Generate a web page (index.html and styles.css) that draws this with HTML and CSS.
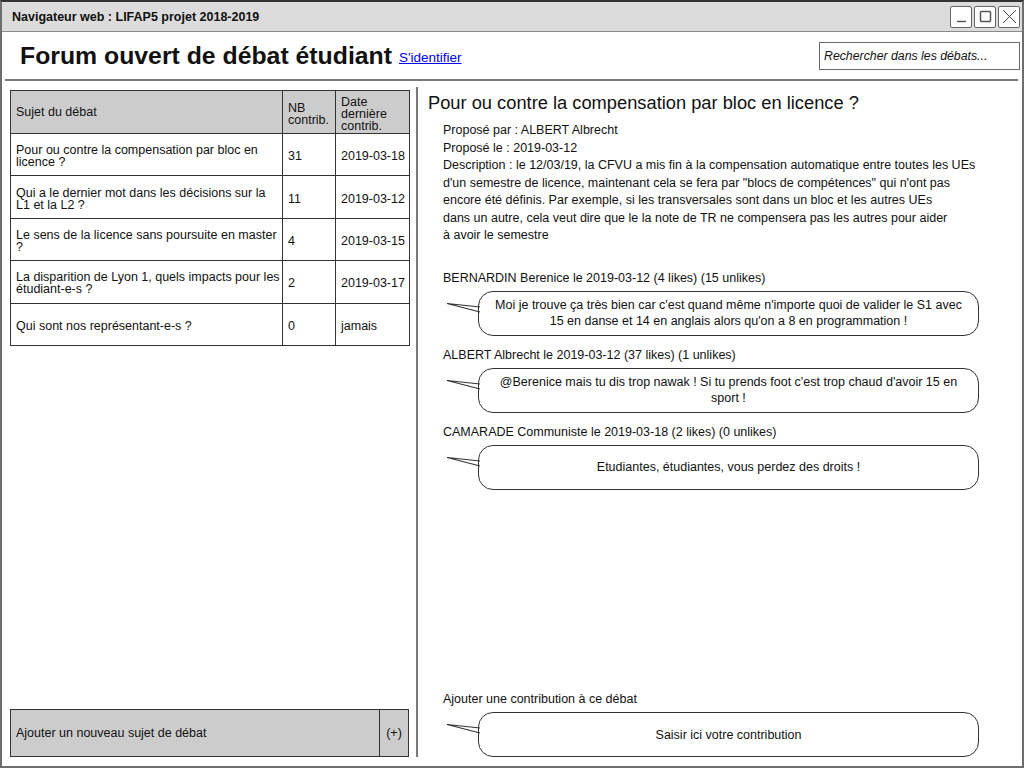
FILE: index.html
```html
<!DOCTYPE html>
<html lang="fr">
<head>
<meta charset="utf-8">
<title>Forum ouvert de débat étudiant</title>
<link rel="stylesheet" href="styles.css">
</head>
<body>
<div class="window">
  <div class="titlebar">
    <span class="titlebar-text">Navigateur web : LIFAP5 projet 2018-2019</span>
    <div class="controls">
      <span class="ctrl"><svg width="17" height="17" viewBox="0 0 17 17"><path d="M4 13.5 H13" stroke="#555" stroke-width="1.5"/></svg></span>
      <span class="ctrl"><svg width="17" height="17" viewBox="0 0 17 17"><rect x="3.5" y="3.5" width="10" height="10" fill="none" stroke="#555" stroke-width="1.5" rx="1"/></svg></span>
      <span class="ctrl"><svg width="17" height="17" viewBox="0 0 17 17"><path d="M2 2 L15 15 M15 2 L2 15" stroke="#444" stroke-width="1"/></svg></span>
    </div>
  </div>
  <div class="header">
    <h1 class="site-title">Forum ouvert de débat étudiant</h1>
    <a class="login" href="#">S'identifier</a>
    <div class="search">Rechercher dans les débats...</div>
  </div>
  <div class="rule"></div>
  <div class="main">
    <div class="left">
      <table class="topics">
        <thead>
          <tr>
            <th class="c-subject">Sujet du débat</th>
            <th class="c-nb">NB<br>contrib.</th>
            <th class="c-date">Date<br>dernière<br>contrib.</th>
          </tr>
        </thead>
        <tbody>
          <tr><td class="c-subject">Pour ou contre la compensation par bloc en<br>licence ?</td><td class="c-nb">31</td><td class="c-date">2019-03-18</td></tr>
          <tr><td class="c-subject">Qui a le dernier mot dans les décisions sur la<br>L1 et la L2 ?</td><td class="c-nb">11</td><td class="c-date">2019-03-12</td></tr>
          <tr><td class="c-subject">Le sens de la licence sans poursuite en master<br>?</td><td class="c-nb">4</td><td class="c-date">2019-03-15</td></tr>
          <tr><td class="c-subject">La disparition de Lyon 1, quels impacts pour les<br>étudiant-e-s ?</td><td class="c-nb">2</td><td class="c-date">2019-03-17</td></tr>
          <tr><td class="c-subject">Qui sont nos représentant-e-s ?</td><td class="c-nb">0</td><td class="c-date">jamais</td></tr>
        </tbody>
      </table>
      <div class="add-topic">
        <span class="add-label">Ajouter un nouveau sujet de débat</span>
        <span class="add-plus">(+)</span>
      </div>
    </div>
    <div class="right">
      <h2 class="debate-title">Pour ou contre la compensation par bloc en licence ?</h2>
      <div class="meta">
        <div>Proposé par : ALBERT Albrecht</div>
        <div>Proposé le : 2019-03-12</div>
        <div>Description : le 12/03/19, la CFVU a mis fin à la compensation automatique entre toutes les UEs<br>d'un semestre de licence, maintenant cela se fera par "blocs de compétences" qui n'ont pas<br>encore été définis. Par exemple, si les transversales sont dans un bloc et les autres UEs<br>dans un autre, cela veut dire que le la note de TR ne compensera pas les autres pour aider<br>à avoir le semestre</div>
      </div>

      <div class="comments">
        <div class="comment">
          <div class="author">BERNARDIN Berenice le 2019-03-12 (4 likes) (15 unlikes)</div>
          <div class="bubble-wrap">
            <svg class="tail" width="34" height="12" viewBox="0 0 34 12"><path d="M0 1.5 L33 5 M0 1.5 L33 10" stroke="#333" stroke-width="1.2" fill="none"/></svg>
            <div class="bubble">Moi je trouve ça très bien car c'est quand même n'importe quoi de valider le S1 avec<br>15 en danse et 14 en anglais alors qu'on a 8 en programmation !</div>
          </div>
        </div>
        <div class="comment">
          <div class="author">ALBERT Albrecht le 2019-03-12 (37 likes) (1 unlikes)</div>
          <div class="bubble-wrap">
            <svg class="tail" width="34" height="12" viewBox="0 0 34 12"><path d="M0 1.5 L33 5 M0 1.5 L33 10" stroke="#333" stroke-width="1.2" fill="none"/></svg>
            <div class="bubble">@Berenice mais tu dis trop nawak ! Si tu prends foot c'est trop chaud d'avoir 15 en<br>sport !</div>
          </div>
        </div>
        <div class="comment">
          <div class="author">CAMARADE Communiste le 2019-03-18 (2 likes) (0 unlikes)</div>
          <div class="bubble-wrap">
            <svg class="tail" width="34" height="12" viewBox="0 0 34 12"><path d="M0 1.5 L33 5 M0 1.5 L33 10" stroke="#333" stroke-width="1.2" fill="none"/></svg>
            <div class="bubble">Etudiantes, étudiantes, vous perdez des droits !</div>
          </div>
        </div>
      </div>

      <div class="comment new-comment">
        <div class="author">Ajouter une contribution à ce débat</div>
        <div class="bubble-wrap">
          <svg class="tail" width="34" height="12" viewBox="0 0 34 12"><path d="M0 1.5 L33 5 M0 1.5 L33 10" stroke="#333" stroke-width="1.2" fill="none"/></svg>
          <div class="bubble">Saisir ici votre contribution</div>
        </div>
      </div>
    </div>
  </div>
</div>
</body>
</html>
```

FILE: styles.css
```css
* { box-sizing: border-box; }

html, body {
  margin: 0;
  padding: 0;
  background: #fff;
}

body {
  font-family: "Liberation Sans", Arial, sans-serif;
  font-size: 12.5px;
  color: #111;
}

.window {
  width: 1024px;
  height: 768px;
  border: 2px solid #6e6e6e;
  border-top-color: #333;
  display: flex;
  flex-direction: column;
  overflow: hidden;
}

.titlebar {
  height: 30px;
  flex: 0 0 30px;
  background: #dcdcdc;
  border-bottom: 1px solid #8a8a8a;
  display: flex;
  align-items: center;
  justify-content: space-between;
  padding: 0 2px 0 10px;
}

.titlebar-text {
  font-weight: bold;
  font-size: 12.5px;
  color: #111;
}

.controls {
  display: flex;
  gap: 2px;
}

.ctrl {
  width: 22px;
  height: 22px;
  border: 1.5px solid #666;
  border-radius: 2px;
  background: #fff;
  display: flex;
  align-items: center;
  justify-content: center;
}

.header {
  height: 47px;
  flex: 0 0 47px;
  display: flex;
  align-items: center;
  padding: 0 2px 0 18px;
}

.site-title {
  margin: 0;
  font-size: 24.8px;
  font-weight: bold;
  color: #111;
}

.login {
  margin-left: 7px;
  margin-top: 4px;
  color: #0000ee;
  font-size: 13.5px;
  text-decoration: underline;
}

.search {
  margin-left: auto;
  width: 201px;
  height: 28px;
  border: 1.5px solid #6a6a6a;
  display: flex;
  align-items: center;
  padding-left: 4px;
  font-style: italic;
  font-size: 12.3px;
  color: #111;
}

.rule {
  margin: 0 4px 0 3px;
  border-top: 2px solid #7a7a7a;
}

.main {
  flex: 1;
  display: flex;
  padding: 6px 0 9px;
  min-height: 0;
}

.left {
  width: 414px;
  flex: 0 0 414px;
  padding: 3px 7px 0 8px;
  display: flex;
  flex-direction: column;
}

.topics {
  width: 399px;
  border-collapse: collapse;
  border: 1.5px solid #333;
  table-layout: fixed;
}

.topics th,
.topics td {
  border: 1px solid #333;
  font-weight: normal;
  text-align: left;
  vertical-align: middle;
  padding: 0 4px 0 5px;
  line-height: 12px;
  font-size: 12.5px;
  white-space: nowrap;
}

.topics thead th {
  background: #cccccc;
  height: 43px;
}

.topics td {
  height: 42.4px;
  padding-top: 3px;
}

.topics .c-subject { width: 272px; }
.topics .c-nb { width: 53px; }
.topics .c-date { width: 74px; }

.topics thead .c-nb,
.topics thead .c-date {
  padding-top: 3px;
}

.add-topic {
  margin-top: auto;
  height: 48px;
  width: 399px;
  background: #cccccc;
  border: 1.5px solid #333;
  display: flex;
  align-items: stretch;
}

.add-label {
  flex: 1;
  display: flex;
  align-items: center;
  padding-left: 5px;
}

.add-plus {
  width: 29px;
  border-left: 1px solid #333;
  display: flex;
  align-items: center;
  justify-content: center;
}

.right {
  flex: 1;
  border-left: 2px solid #7a7a7a;
  padding: 5px 0 0 10px;
  display: flex;
  flex-direction: column;
}

.debate-title {
  margin: 0;
  font-size: 18.3px;
  font-weight: normal;
  line-height: 22px;
  color: #111;
}

.meta {
  padding-left: 15px;
  margin-top: 8px;
  line-height: 17.5px;
}

.comments {
  margin-top: 25px;
  display: flex;
  flex-direction: column;
  gap: 11px;
}

.comment {
  padding-left: 15px;
}

.author {
  line-height: 17px;
}

.bubble-wrap {
  position: relative;
  margin-top: 4px;
  padding-left: 35px;
}

.tail {
  position: absolute;
  left: 4px;
  top: 11px;
}

.bubble {
  width: 501px;
  height: 45px;
  border: 1.5px solid #333;
  border-radius: 15px;
  display: flex;
  align-items: center;
  justify-content: center;
  text-align: center;
  line-height: 16px;
  background: #fff;
}

.new-comment {
  margin-top: auto;
}
```
